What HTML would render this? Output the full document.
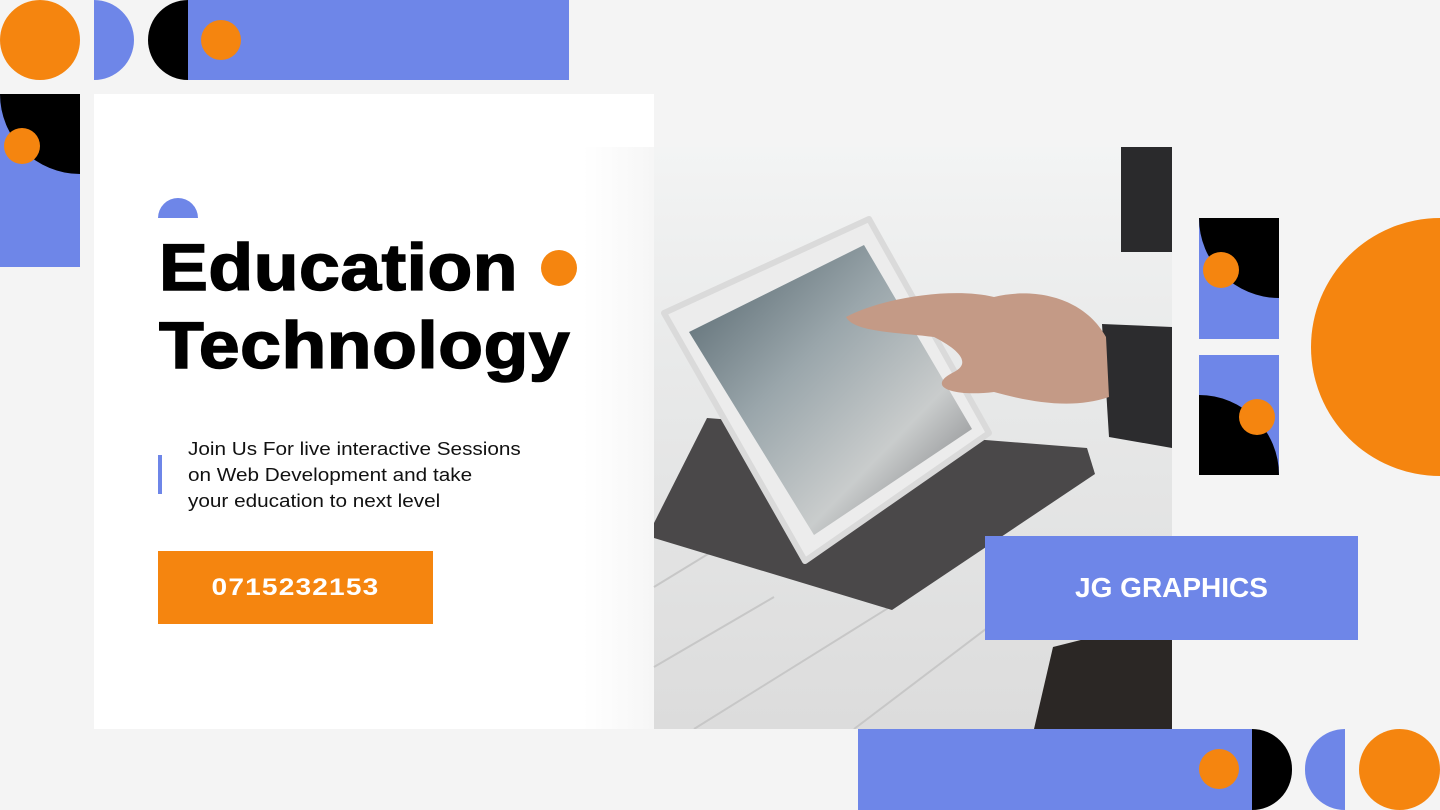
<!DOCTYPE html>
<html><head><meta charset="utf-8"><style>
*{margin:0;padding:0;box-sizing:border-box}
body{width:1440px;height:810px;background:#f4f4f4;position:relative;overflow:hidden;font-family:"Liberation Sans",sans-serif}
.a{position:absolute}
.o{background:#f5850f}.b{background:#6e86e8}.k{background:#000}
</style></head><body>
<div class="a o" style="left:0;top:0;width:80px;height:80px;border-radius:50%"></div>
<div class="a b" style="left:94px;top:0;width:40px;height:80px;border-radius:0 40px 40px 0"></div>
<div class="a k" style="left:148px;top:0;width:40px;height:80px;border-radius:40px 0 0 40px"></div>
<div class="a b" style="left:188px;top:0;width:381px;height:80px"></div>
<div class="a o" style="left:201px;top:20px;width:40px;height:40px;border-radius:50%"></div>
<div class="a b" style="left:0;top:94px;width:80px;height:173px;overflow:hidden">
 <div class="a k" style="left:0;top:-80px;width:160px;height:160px;border-radius:50%"></div>
 <div class="a o" style="left:4px;top:34px;width:36px;height:36px;border-radius:50%"></div>
</div>
<div class="a" style="left:94px;top:94px;width:560px;height:635px;background:#fff"></div>
<svg class="a" style="left:583px;top:147px" width="589" height="582" viewBox="-71 0 589 582">
 <defs>
  <linearGradient id="bg" x1="0" y1="0" x2="0" y2="1"><stop offset="0" stop-color="#f3f4f4"/><stop offset=".35" stop-color="#e9eaea"/><stop offset="1" stop-color="#dcdcdc"/></linearGradient>
  <linearGradient id="fade" x1="0" x2="1"><stop offset="0" stop-color="#fff"/><stop offset="1" stop-color="#f6f6f6"/></linearGradient>
  <linearGradient id="scr" x1="0" y1="0" x2="1" y2="1"><stop offset="0" stop-color="#51626a"/><stop offset=".4" stop-color="#9aa6ab"/><stop offset=".7" stop-color="#c9cccc"/><stop offset="1" stop-color="#6c6c70"/></linearGradient>
 </defs>
 <rect x="-71" y="0" width="71" height="582" fill="url(#fade)"/>
 <rect x="0" y="0" width="518" height="582" fill="url(#bg)"/>
 <g stroke="#c7c7c7" stroke-width="2"><line x1="0" y1="440" x2="180" y2="330"/><line x1="40" y1="582" x2="300" y2="420"/><line x1="200" y1="582" x2="440" y2="400"/><line x1="0" y1="520" x2="120" y2="450"/></g>
 <rect x="467" y="0" width="51" height="105" fill="#2a2a2c"/>
 <path d="M399 500 L518 470 L518 582 L380 582 Z" fill="#2b2725"/>
 <polygon points="0,376 53,271 433,301 441,327 238,463 0,391" fill="#4a4849"/>
 <polygon points="10,166 215,72 335,286 151,414" fill="#ececec" stroke="#dadada" stroke-width="6" stroke-linejoin="round"/>
 <polygon points="35,185 210,98 318,282 160,388" fill="url(#scr)"/>
 <path d="M448 177 L518 180 L518 301 L455 290 Z" fill="#2c2c2e"/>
 <path d="M192 170 C230 150 300 140 340 150 C380 140 430 150 452 190 L455 250 C420 262 380 256 340 245 C300 250 270 240 300 225 C320 215 300 200 280 190 C240 185 200 185 192 170 Z" fill="#c49a86"/>
</svg>
<div class="a b" style="left:158px;top:198px;width:40px;height:20px;border-radius:20px 20px 0 0"></div>
<div class="a" style="left:159px;top:228px;font-weight:900;font-size:66px;line-height:78px;color:#000;letter-spacing:0.5px;transform:scaleX(1.11);transform-origin:left;-webkit-text-stroke:1.5px #000">Education<br>Technology</div>
<div class="a o" style="left:541px;top:250px;width:36px;height:36px;border-radius:50%"></div>
<div class="a b" style="left:158px;top:455px;width:4px;height:39px"></div>
<div class="a" style="left:188px;top:436px;font-size:18.5px;line-height:26px;color:#111;transform:scaleX(1.12);transform-origin:left;white-space:nowrap">Join Us For live interactive Sessions<br>on Web Development and take<br>your education to next level</div>
<div class="a o" style="left:158px;top:551px;width:275px;height:73px"></div>
<div class="a" style="left:158px;top:551px;width:275px;height:73px;color:#fff;font-weight:bold;font-size:24px;line-height:73px;text-align:center;letter-spacing:1px;transform:scaleX(1.17)">0715232153</div>
<div class="a b" style="left:1199px;top:218px;width:80px;height:121px;overflow:hidden">
 <div class="a k" style="left:0;top:-80px;width:160px;height:160px;border-radius:50%"></div>
 <div class="a o" style="left:4px;top:34px;width:36px;height:36px;border-radius:50%"></div>
</div>
<div class="a b" style="left:1199px;top:355px;width:80px;height:120px;overflow:hidden">
 <div class="a k" style="left:-80px;top:40px;width:160px;height:160px;border-radius:50%"></div>
 <div class="a o" style="left:40px;top:44px;width:36px;height:36px;border-radius:50%"></div>
</div>
<div class="a o" style="left:1311px;top:218px;width:258px;height:258px;border-radius:50%"></div>
<div class="a b" style="left:985px;top:536px;width:373px;height:104px;color:#fff;font-weight:bold;font-size:28px;line-height:104px;text-align:center">JG GRAPHICS</div>
<div class="a b" style="left:858px;top:729px;width:394px;height:81px"></div>
<div class="a o" style="left:1199px;top:749px;width:40px;height:40px;border-radius:50%"></div>
<div class="a k" style="left:1252px;top:729px;width:40px;height:81px;border-radius:0 40px 40px 0"></div>
<div class="a b" style="left:1305px;top:729px;width:40px;height:81px;border-radius:40px 0 0 40px"></div>
<div class="a o" style="left:1359px;top:729px;width:81px;height:81px;border-radius:50%"></div>
</body></html>
